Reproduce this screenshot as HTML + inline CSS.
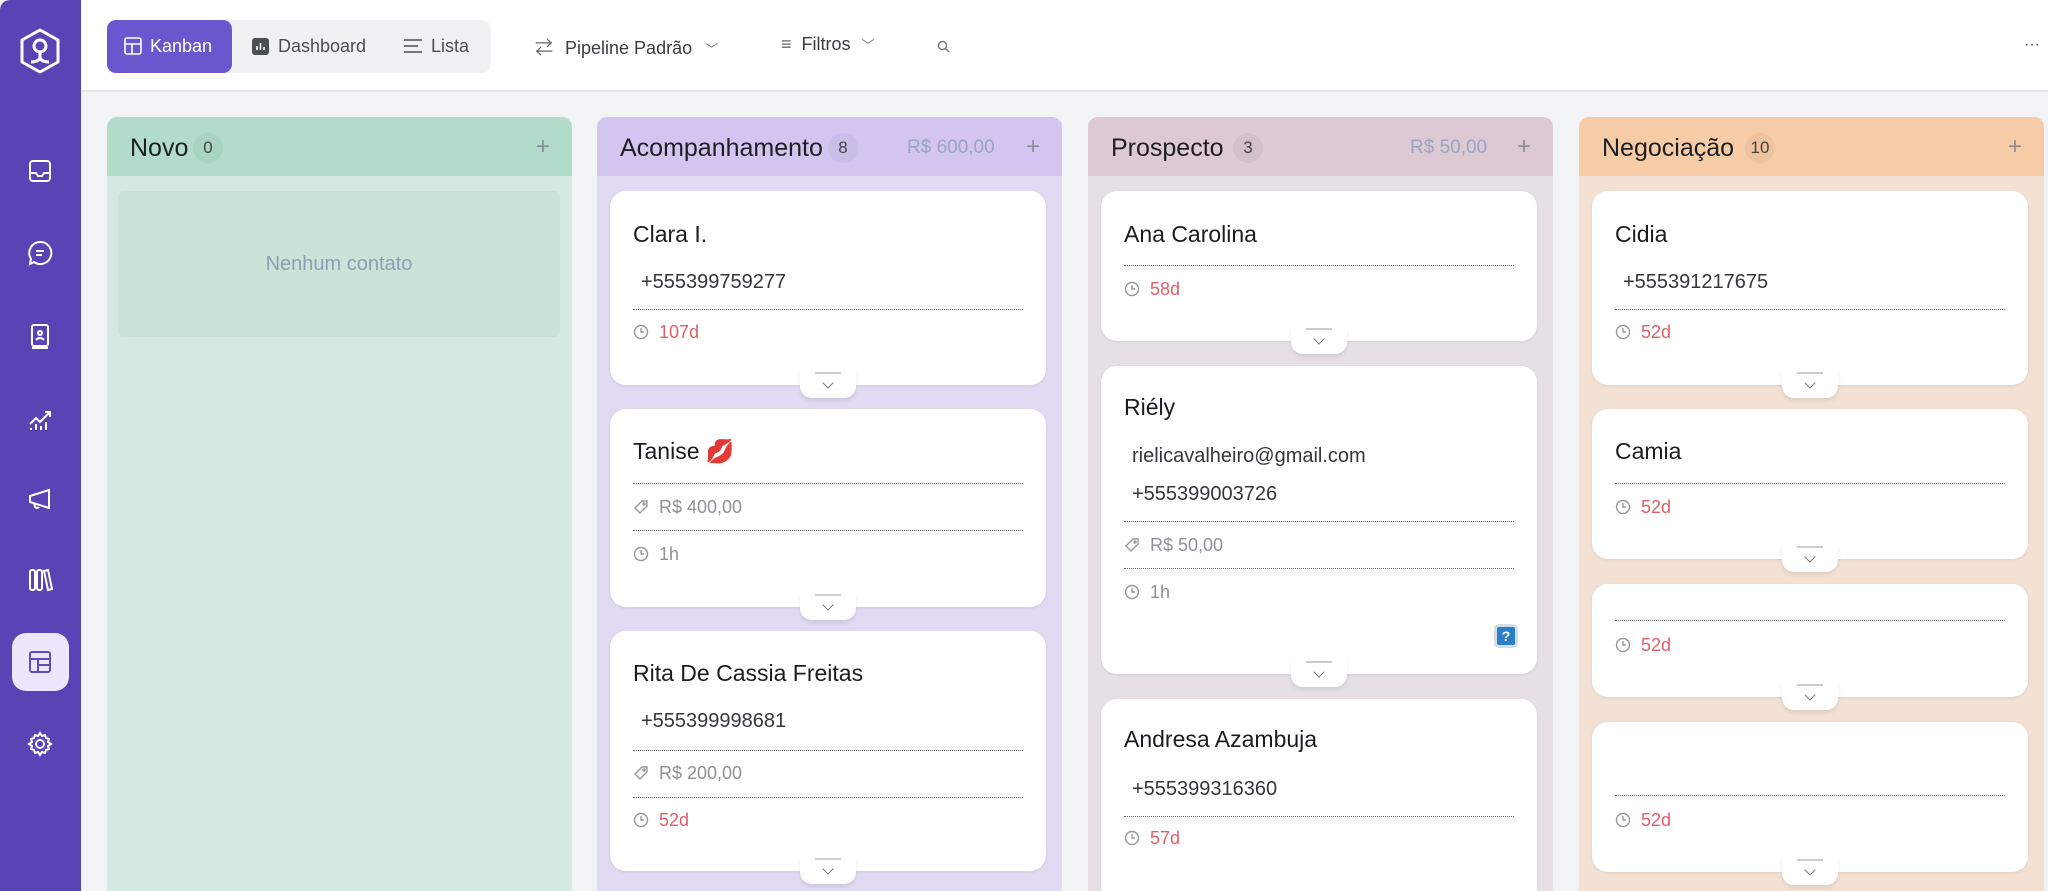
<!DOCTYPE html>
<html><head><meta charset="utf-8"><style>
*{box-sizing:border-box;margin:0;padding:0}
html,body{width:2048px;height:891px;overflow:hidden}
body{background:#f1f3f4;font-family:"Liberation Sans","Noto Sans CJK JP",sans-serif;position:relative}
.abs{position:absolute}
#side{left:0;top:0;width:81px;height:891px;background:#5844b4;border-top-left-radius:10px}
.si{position:absolute;left:24px;width:32px;height:32px}
#top{left:81px;top:0;width:1967px;height:92px;background:#fff;border-bottom:2px solid #e3e6e8}
.tabs{left:107px;top:20px;width:384px;height:53px;background:#f0f1f3;border-radius:9px}
.tab{position:absolute;top:3px;height:47px;line-height:47px;font-size:18px;color:#4a4f55}
.col{position:absolute;top:117px;width:465px;height:774px;border-radius:10px 10px 0 0;overflow:hidden}
.ch{height:59px;position:relative}
.ct{position:absolute;left:23px;top:17px;font-size:25px;color:#1d1f23}
.cnt{position:absolute;top:16px;width:30px;height:30px;border-radius:15px;font-size:17px;line-height:30px;text-align:center;color:#444}
.plus{position:absolute;right:22px;top:16px;font-size:24px;color:#8a8f98;font-weight:300}
.sum{position:absolute;top:20px;font-size:19px;color:#98a6be}
.card{position:absolute;left:13px;width:436px;background:#fff;border-radius:16px;box-shadow:0 1px 3px rgba(0,0,0,.08)}
.nm{position:absolute;left:23px;font-size:23px;color:#1b1c1f;line-height:30px;margin-top:-15px;white-space:nowrap}
.ph{position:absolute;left:31px;font-size:20px;color:#34373c;line-height:26px;margin-top:-13px}
.dv{position:absolute;left:23px;right:23px;border-top:1px dotted #666;height:0}
.mt{position:absolute;left:23px;font-size:18px;color:#8e9197;line-height:24px;margin-top:-12px;padding-left:26px}
.mt.r{color:#e0606a}
.mt svg{position:absolute;left:0;top:4px}
.chev{position:absolute;left:50%;margin-left:-28px;bottom:-13px;width:56px;height:28px;background:#fff;border-radius:0 0 12px 12px;box-shadow:0 3px 4px rgba(0,0,0,.08)}
.chev:before{content:"";position:absolute;left:15px;top:2px;width:26px;height:2px;background:#ccc}
.chev:after{content:"";position:absolute;left:24px;top:9px;width:7px;height:7px;border-right:1.5px solid #777;border-bottom:1.5px solid #777;transform:rotate(45deg)}
</style></head><body>
<div id="side" class="abs">
<svg class="abs" style="left:19px;top:28px" width="42" height="46" viewBox="0 0 42 46"><path d="M21 2 L39 12 V34 L21 44 L3 34 V12 Z" fill="none" stroke="#fff" stroke-width="3" stroke-linejoin="round"/><circle cx="21" cy="18" r="6" fill="none" stroke="#fff" stroke-width="3"/><path d="M21 24 V28 Q21 34 12 34 M21 28 Q21 34 30 34" fill="none" stroke="#fff" stroke-width="3"/></svg>
<svg class="si" style="top:155px" viewBox="0 0 32 32" fill="none" stroke="#fff" stroke-width="2"><rect x="6" y="6" width="20" height="20" rx="3"/><path d="M6 18h6l2 3h4l2-3h6"/></svg>
<svg class="si" style="top:237px" viewBox="0 0 32 32" fill="none" stroke="#fff" stroke-width="2"><path d="M16 5a11 11 0 1 1-6 20l-4 2 1-5A11 11 0 0 1 16 5z"/><path d="M12 14h8M12 18h6"/></svg>
<svg class="si" style="top:320px" viewBox="0 0 32 32" fill="none" stroke="#fff" stroke-width="2"><rect x="8" y="5" width="16" height="21" rx="2"/><circle cx="16" cy="13" r="2"/><path d="M12 20q4-4 8 0M8 28h16"/></svg>
<svg class="si" style="top:402px" viewBox="0 0 32 32" fill="none" stroke="#fff" stroke-width="2"><path d="M6 22l6-6 4 4 10-10M21 10h5v5M7 26v2M12 22v6M17 24v4M22 20v8"/></svg>
<svg class="si" style="top:483px" viewBox="0 0 32 32" fill="none" stroke="#fff" stroke-width="2"><path d="M6 13v6l19 6V7L6 13zM10 20l1 4q2 2 4 0"/></svg>
<svg class="si" style="top:564px" viewBox="0 0 32 32" fill="none" stroke="#fff" stroke-width="2"><rect x="6" y="6" width="5" height="20" rx="2"/><rect x="13" y="6" width="5" height="20" rx="2"/><path d="M20 7l4-1 4 19-4 1z"/></svg>
<div class="abs" style="left:12px;top:633px;width:57px;height:58px;border-radius:14px;background:#ece6ff"></div>
<svg class="si" style="top:646px" viewBox="0 0 32 32" fill="none" stroke="#5f4cc4" stroke-width="2"><rect x="6" y="6" width="20" height="20" rx="2"/><path d="M6 13h20M14 13v13M14 19h12"/></svg>
<svg class="si" style="top:728px" viewBox="0 0 32 32" fill="none" stroke="#fff" stroke-width="2"><circle cx="16" cy="16" r="4"/><path d="M16 5l2 3 3-1 1 3 3 1-1 3 3 2-3 2 1 3-3 1-1 3-3-1-2 3-2-3-3 1-1-3-3-1 1-3-3-2 3-2-1-3 3-1 1-3 3 1z"/></svg>
</div>
<div id="top" class="abs"></div>
<div class="abs tabs">
 <div class="abs" style="left:0;top:0;width:125px;height:53px;background:#6a56cf;border-radius:9px"></div>
 <div class="tab" style="left:17px;color:#fff"><svg width="18" height="18" viewBox="0 0 18 18" style="vertical-align:-3px;margin-right:8px" fill="none" stroke="#fff" stroke-width="1.6"><rect x="1" y="1" width="16" height="16" rx="2"/><path d="M1 7h16M8 7v10"/></svg>Kanban</div>
 <div class="tab" style="left:145px"><svg width="17" height="17" viewBox="0 0 17 17" style="vertical-align:-3px;margin-right:9px"><rect width="17" height="17" rx="3" fill="#4a4f55"/><path d="M5 12V8M8.5 12V5M12 12V9" stroke="#fff" stroke-width="1.6"/></svg>Dashboard</div>
 <div class="tab" style="left:297px"><svg width="18" height="14" viewBox="0 0 18 14" style="vertical-align:-1px;margin-right:9px" stroke="#4a4f55" stroke-width="1.6"><path d="M0 1h18M0 7h14M0 13h18"/></svg>Lista</div>
</div>
<div class="abs" style="left:535px;top:34px;font-size:18px;color:#3a3d42"><span style="color:#666;margin-right:12px">⇄</span>Pipeline Padrão <span style="font-size:13px;color:#777;margin-left:8px">﹀</span></div>
<div class="abs" style="left:781px;top:34px;font-size:18px;color:#3a3d42"><span style="color:#666;margin-right:10px">≡</span>Filtros <span style="font-size:13px;color:#777;margin-left:6px">﹀</span></div>
<svg class="abs" style="left:937px;top:40px" width="13" height="13" viewBox="0 0 13 13" fill="none" stroke="#777" stroke-width="1.4"><circle cx="5.5" cy="5.5" r="4"/><path d="M8.5 8.5l3.5 3.5"/></svg>
<div class="abs" style="left:2024px;top:36px;font-size:16px;color:#555">···</div>

<div class="col" style="left:107px;background:#d3e9e1">
 <div class="ch" style="background:#b2dcc9"><div class="ct">Novo</div><div class="cnt" style="left:86px;background:#a8d4c0">0</div><div class="plus">+</div></div>
 <div class="abs" style="left:11px;top:74px;width:442px;height:146px;background:#c9e3d9;border-radius:6px;text-align:center;line-height:146px;font-size:20px;color:#8c9fb3">Nenhum contato</div>
</div>

<div class="col" style="left:597px;background:#e0daf2">
 <div class="ch" style="background:#d3c4f0"><div class="ct">Acompanhamento</div><div class="cnt" style="left:231px;background:#cabde6">8</div><div class="sum" style="left:310px">R$ 600,00</div><div class="plus">+</div></div>
 <div class="card" style="top:74px;height:194px">
  <div class="nm" style="top:43px">Clara I.</div><div class="ph" style="top:91px">+555399759277</div><div class="dv" style="top:118px"></div>
  <div class="mt r" style="top:141px"><svg width="16" height="16" viewBox="0 0 16 16" fill="none" stroke="#999" stroke-width="1.4"><circle cx="8" cy="8" r="6.5"/><path d="M8 4v4h3"/></svg>107d</div><div class="chev"></div></div>
 <div class="card" style="top:292px;height:198px">
  <div class="nm" style="top:42px">Tanise <span style="color:#d22">💋</span></div><div class="dv" style="top:74px"></div>
  <div class="mt" style="top:98px"><svg width="16" height="16" viewBox="0 0 16 16" fill="none" stroke="#999" stroke-width="1.4"><path d="M9 2h5v5l-7 7-5-5z"/><circle cx="11" cy="5" r="1"/></svg>R$ 400,00</div><div class="dv" style="top:121px"></div>
  <div class="mt" style="top:145px"><svg width="16" height="16" viewBox="0 0 16 16" fill="none" stroke="#999" stroke-width="1.4"><circle cx="8" cy="8" r="6.5"/><path d="M8 4v4h3"/></svg>1h</div><div class="chev"></div></div>
 <div class="card" style="top:514px;height:240px">
  <div class="nm" style="top:42px">Rita De Cassia Freitas</div><div class="ph" style="top:90px">+555399998681</div><div class="dv" style="top:119px"></div>
  <div class="mt" style="top:142px"><svg width="16" height="16" viewBox="0 0 16 16" fill="none" stroke="#999" stroke-width="1.4"><path d="M9 2h5v5l-7 7-5-5z"/><circle cx="11" cy="5" r="1"/></svg>R$ 200,00</div><div class="dv" style="top:166px"></div>
  <div class="mt r" style="top:189px"><svg width="16" height="16" viewBox="0 0 16 16" fill="none" stroke="#999" stroke-width="1.4"><circle cx="8" cy="8" r="6.5"/><path d="M8 4v4h3"/></svg>52d</div><div class="chev"></div></div>
</div>

<div class="col" style="left:1088px;background:#e6e0e5">
 <div class="ch" style="background:#ddc9d3"><div class="ct">Prospecto</div><div class="cnt" style="left:145px;background:#d3c0ca">3</div><div class="sum" style="left:322px">R$ 50,00</div><div class="plus">+</div></div>
 <div class="card" style="top:74px;height:150px">
  <div class="nm" style="top:43px">Ana Carolina</div><div class="dv" style="top:74px"></div>
  <div class="mt r" style="top:98px"><svg width="16" height="16" viewBox="0 0 16 16" fill="none" stroke="#999" stroke-width="1.4"><circle cx="8" cy="8" r="6.5"/><path d="M8 4v4h3"/></svg>58d</div><div class="chev"></div></div>
 <div class="card" style="top:249px;height:308px">
  <div class="nm" style="top:41px">Riély</div><div class="ph" style="top:90px">rielicavalheiro@gmail.com</div><div class="ph" style="top:128px">+555399003726</div><div class="dv" style="top:155px"></div>
  <div class="mt" style="top:179px"><svg width="16" height="16" viewBox="0 0 16 16" fill="none" stroke="#999" stroke-width="1.4"><path d="M9 2h5v5l-7 7-5-5z"/><circle cx="11" cy="5" r="1"/></svg>R$ 50,00</div><div class="dv" style="top:202px"></div>
  <div class="mt" style="top:226px"><svg width="16" height="16" viewBox="0 0 16 16" fill="none" stroke="#999" stroke-width="1.4"><circle cx="8" cy="8" r="6.5"/><path d="M8 4v4h3"/></svg>1h</div>
  <div class="abs" style="left:393px;top:258px;width:24px;height:24px;background:#2a7fc8;border:3px solid #d5dde6;color:#fff;font-size:14px;font-weight:bold;text-align:center;line-height:18px;border-radius:5px">?</div>
  <div class="chev"></div></div>
 <div class="card" style="top:582px;height:192px;border-radius:16px 16px 0 0">
  <div class="nm" style="top:40px">Andresa Azambuja</div><div class="ph" style="top:90px">+555399316360</div><div class="dv" style="top:117px"></div>
  <div class="mt r" style="top:139px"><svg width="16" height="16" viewBox="0 0 16 16" fill="none" stroke="#999" stroke-width="1.4"><circle cx="8" cy="8" r="6.5"/><path d="M8 4v4h3"/></svg>57d</div></div>
</div>

<div class="col" style="left:1579px;background:#f3e1d3">
 <div class="ch" style="background:#f6cca6"><div class="ct">Negociação</div><div class="cnt" style="left:166px;background:#eec39d">10</div><div class="plus">+</div></div>
 <div class="card" style="top:74px;height:194px">
  <div class="nm" style="top:43px">Cidia</div><div class="ph" style="top:91px">+555391217675</div><div class="dv" style="top:118px"></div>
  <div class="mt r" style="top:141px"><svg width="16" height="16" viewBox="0 0 16 16" fill="none" stroke="#999" stroke-width="1.4"><circle cx="8" cy="8" r="6.5"/><path d="M8 4v4h3"/></svg>52d</div><div class="chev"></div></div>
 <div class="card" style="top:292px;height:150px">
  <div class="nm" style="top:42px">Camia</div><div class="dv" style="top:74px"></div>
  <div class="mt r" style="top:98px"><svg width="16" height="16" viewBox="0 0 16 16" fill="none" stroke="#999" stroke-width="1.4"><circle cx="8" cy="8" r="6.5"/><path d="M8 4v4h3"/></svg>52d</div><div class="chev"></div></div>
 <div class="card" style="top:467px;height:113px">
  <div class="dv" style="top:36px"></div>
  <div class="mt r" style="top:61px"><svg width="16" height="16" viewBox="0 0 16 16" fill="none" stroke="#999" stroke-width="1.4"><circle cx="8" cy="8" r="6.5"/><path d="M8 4v4h3"/></svg>52d</div><div class="chev"></div></div>
 <div class="card" style="top:605px;height:150px">
  <div class="dv" style="top:73px"></div>
  <div class="mt r" style="top:98px"><svg width="16" height="16" viewBox="0 0 16 16" fill="none" stroke="#999" stroke-width="1.4"><circle cx="8" cy="8" r="6.5"/><path d="M8 4v4h3"/></svg>52d</div><div class="chev"></div></div>
</div>
</body></html>
